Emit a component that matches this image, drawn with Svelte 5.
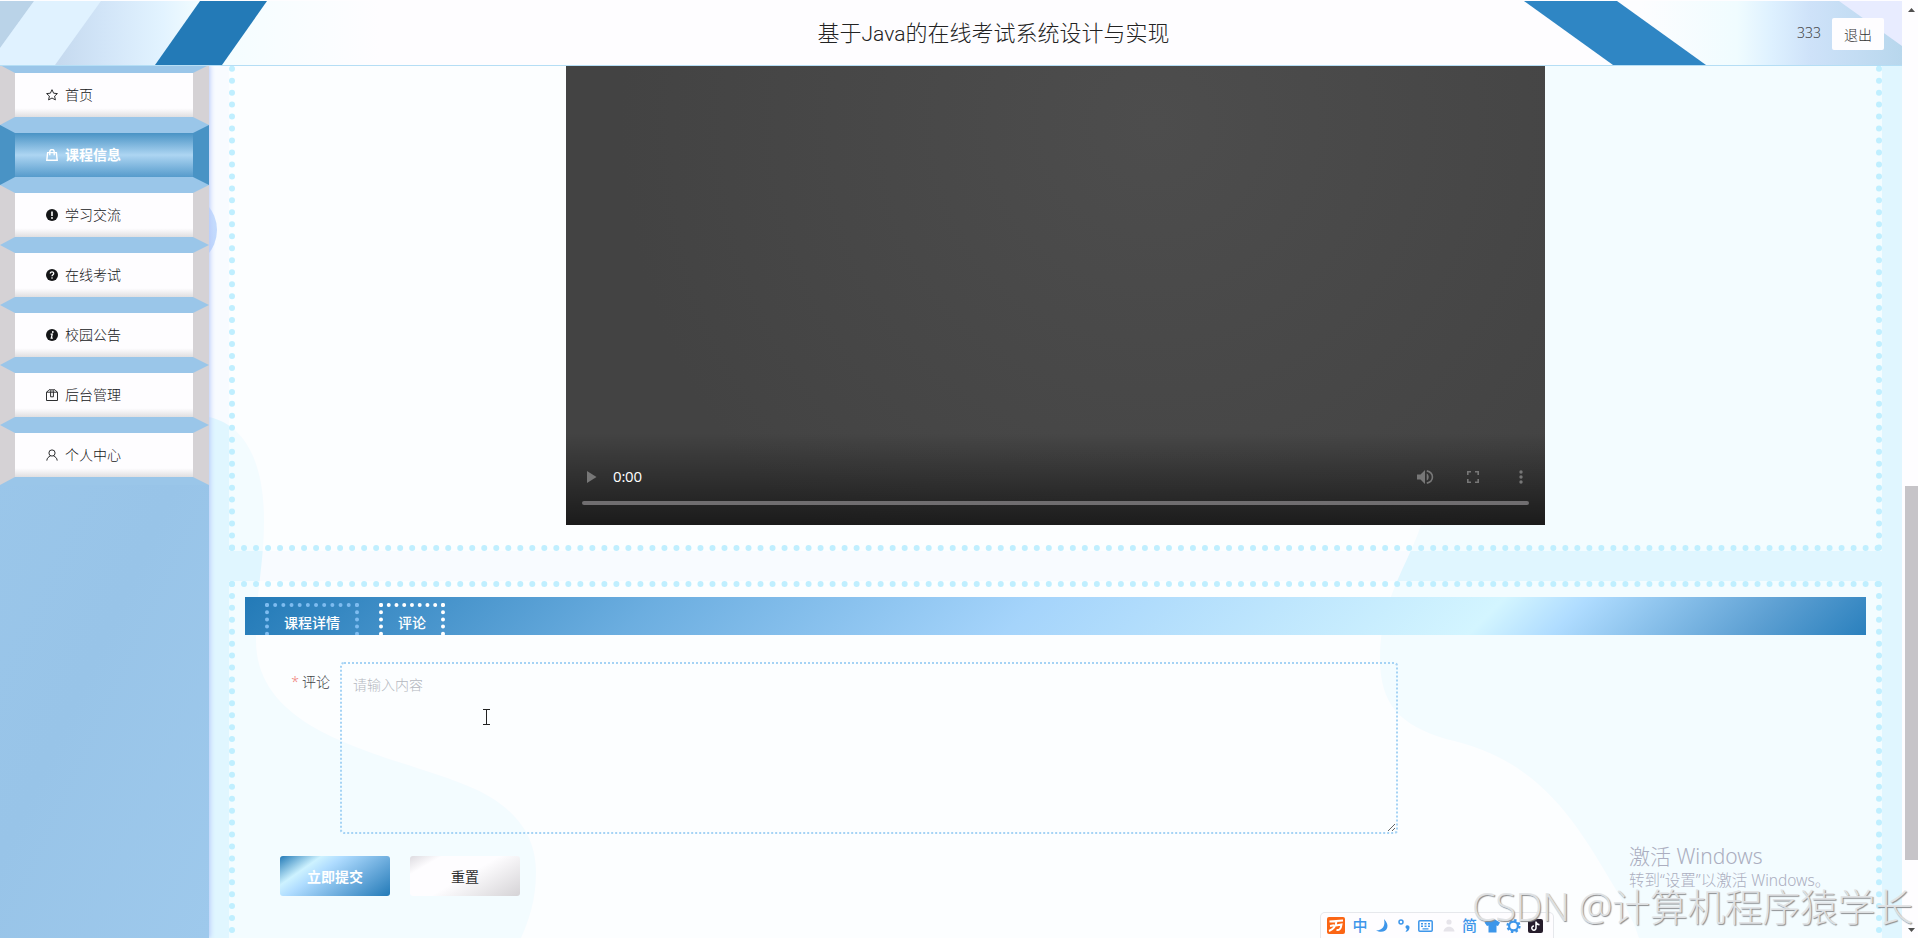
<script>
  const menu = [
    { label: '首页', icon: 'star' },
    { label: '课程信息', icon: 'bag', active: true },
    { label: '学习交流', icon: 'warn' },
    { label: '在线考试', icon: 'question' },
    { label: '校园公告', icon: 'info' },
    { label: '后台管理', icon: 'box' },
    { label: '个人中心', icon: 'user' }
  ];
  const tabs = [{ label: '课程详情' }, { label: '评论', active: true }];
</script>

<div class="screen">
  <header>
    <svg class="banner" width="1902" height="65" viewBox="0 0 1902 65">
      <defs>
        <linearGradient id="hl" gradientUnits="userSpaceOnUse" x1="60" y1="0" x2="380" y2="0">
          <stop offset="0" stop-color="#c6daef" /><stop offset=".14" stop-color="#d2e5f8" /><stop offset=".32" stop-color="#e2f3ff" /><stop offset=".44" stop-color="#f3fdff" /><stop offset=".68" stop-color="#f8fdff" /><stop offset="1" stop-color="#fefdff" />
        </linearGradient>
        <linearGradient id="hr" gradientUnits="userSpaceOnUse" x1="1640" y1="0" x2="1902" y2="0">
          <stop offset="0" stop-color="#fdfdff" /><stop offset=".37" stop-color="#f0fcff" /><stop offset=".5" stop-color="#def1ff" /><stop offset=".65" stop-color="#cee2f9" /><stop offset="1" stop-color="#b8d7ed" />
        </linearGradient>
      </defs>
      <path d="M0 1H380V65H0z" fill="url(#hl)" />
      <path d="M0 1H34L0 48z" fill="#bad3e8" />
      <path d="M34 1H101L55 65H0V48z" fill="#e0f2ff" />
      <path d="M200 1H267L222 65H155z" fill="#237ab7" />
      <path d="M1617 1H1902V65H1706z" fill="url(#hr)" />
      <path d="M1839 1H1902V46z" fill="#e8ecff" />
      <path d="M1524 1H1617L1706 65H1613z" fill="#2f86c4" />
    </svg>
    <h1>基于<span>Java</span>的在线考试系统设计与实现</h1>
    <div class="account"><span>333</span><button>退出</button></div>
  </header>

  <aside>
    {#each menu as item}
      <div class="item" class:active={item.active}>
        <svg width="12" height="12" viewBox="0 0 12 12" fill="none" stroke="currentColor" stroke-width=".9">
          {#if item.icon === 'star'}
            <path d="M6 .7 7.6 4.2 11.4 4.6 8.6 7.1 9.4 10.9 6 9 2.6 10.9 3.4 7.1 .6 4.6 4.4 4.2z" />
          {:else if item.icon === 'bag'}
            <path d="M1.6 3.6H10.4L11.2 11.3H.8zM3.8 6.2V2.8C3.8-.3 8.2-.3 8.2 2.8V6.2" stroke-width="1.4" />
          {:else if item.icon === 'warn'}
            <circle cx="6" cy="6" r="6" fill="currentColor" stroke="none" /><path d="M6 2.5V7" stroke="#fff" stroke-width="1.6" /><circle cx="6" cy="9" r=".9" fill="#fff" stroke="none" />
          {:else if item.icon === 'question'}
            <circle cx="6" cy="6" r="6" fill="currentColor" stroke="none" /><path d="M4.3 4.6C4.3 2.3 7.8 2.4 7.7 4.5 7.7 5.8 6 5.8 6 7.3" stroke="#fff" stroke-width="1.3" /><circle cx="6" cy="9" r=".8" fill="#fff" stroke="none" />
          {:else if item.icon === 'info'}
            <circle cx="6" cy="6" r="6" fill="currentColor" stroke="none" /><path d="M4.6 5.2H6.2L5.3 9.2H6.8" stroke="#fff" stroke-width="1.3" /><circle cx="6.8" cy="3" r=".9" fill="#fff" stroke="none" />
          {:else if item.icon === 'box'}
            <path d="M.5 3.2H11.5V11.5H.5zM.7 3.2 3 .8H9L11.3 3.2M4.6 3.2V7.8H7.4V3.2M4.8 1.2V3M7.2 1.2V3" />
          {:else}
            <circle cx="6" cy="4" r="3.1" /><path d="M.8 11.6C1 8.9 2.7 7.7 4.4 7.1M11.2 11.6C11 8.9 9.3 7.7 7.6 7.1" />
          {/if}
        </svg>
        <span>{item.label}</span>
      </div>
    {/each}
  </aside>

  <main>
    <svg class="blobs" width="1693" height="872" viewBox="209 66 1693 872">
      <defs><linearGradient id="ball" x1="0" x2="1" y1="0" y2="1"><stop offset="0" stop-color="#d8e8ff" /><stop offset="1" stop-color="#bcd5fc" /></linearGradient></defs>
      <circle cx="180" cy="230" r="37" fill="url(#ball)" />
      <path fill="#e0f6ff" d="M209 417C245 425 264 462 264 520C264 565 256 590 256 640C256 740 400 755 475 789C520 810 536 840 536 872C536 900 529 920 521 938H209z" />
      <path fill="#e0f6ff" d="M1480 66C1490 250 1445 440 1421 525C1408 565 1380 600 1380 658C1380 705 1400 725 1446 739C1545 760 1580 830 1618 893C1630 915 1635 925 1639 938H1902V66z" />
    </svg>

    <section class="card media">
      <div class="video">
        <div class="controls">
          <svg width="10" height="12" viewBox="0 0 10 12"><path d="M0 0 9.5 6 0 12z" fill="#777" /></svg>
          <time>0:00</time>
          <svg class="vol" width="17" height="14" viewBox="0 0 17 14" fill="#777"><path d="M0 4.5H3.5L8 0V14L3.5 9.5H0zM9.7 3.4C12.4 4.6 12.4 9.4 9.7 10.6z" /><path d="M9.8 .9C17.3 2.6 17.3 11.4 9.8 13.1" fill="none" stroke="#777" stroke-width="1.6" /></svg>
          <svg class="full" width="12" height="12" viewBox="0 0 12 12" fill="none" stroke="#777" stroke-width="1.6"><path d="M.8 4V.8H4M8 .8H11.2V4M11.2 8V11.2H8M4 11.2H.8V8" /></svg>
          <svg class="more" width="4" height="14" viewBox="0 0 4 14" fill="#777"><circle cx="2" cy="2" r="1.7" /><circle cx="2" cy="7" r="1.7" /><circle cx="2" cy="12" r="1.7" /></svg>
        </div>
        <div class="track"></div>
      </div>
    </section>

    <section class="card discuss">
      <nav>
        {#each tabs as tab}
          <div class="tab" class:current={tab.active}>{tab.label}</div>
        {/each}
      </nav>
      <div class="row">
        <label for="comment"><i>*</i>评论</label>
        <textarea id="comment" placeholder="请输入内容"></textarea>
      </div>
      <div class="actions">
        <button class="submit">立即提交</button>
        <button class="reset">重置</button>
      </div>
    </section>
  </main>

  <div class="scrollbar">
    <svg width="7" height="4" viewBox="0 0 7 4"><path d="M0 4 3.5 0 7 4z" fill="#505050" /></svg>
    <div class="thumb"></div>
    <svg width="7" height="4" viewBox="0 0 7 4"><path d="M0 0H7L3.5 4z" fill="#505050" /></svg>
  </div>

  <svg class="caret" width="7" height="16" viewBox="0 0 7 16" fill="none" stroke="#222"><path d="M0 .5H7M0 15.5H7M3.5 0V16" /></svg>

  <div class="ime">
    <svg width="232" height="25" viewBox="0 0 232 25">
      <rect x="6" y="4" width="18" height="17" rx="2" fill="#fb6514" />
      <path d="M8.500 8.500 22 7.500M8 18C13 16 15 12 15.500 8.500M15 12.500 20.500 11.500C20 15 19 17.500 15.500 17M9 13 13 12.300" fill="none" stroke="#fff" stroke-width="1.900" />
      <g fill="#3d96ea">
        <path d="M63 6C71 14 64 22 55 17.500C62 17 64.500 13 63 6z" />
        <circle cx="80" cy="9" r="2" fill="none" stroke="#3d96ea" stroke-width="1.500" />
        <path d="M84.500 13.500C85.500 11.500 89 12 88.500 15C88 17.500 87 18.500 84.500 19L86 16A2.200 2.200 0 0 1 84.500 13.500z" />
        <rect x="97.800" y="7.800" width="13.400" height="10.400" rx="1" fill="none" stroke="#3d96ea" stroke-width="1.500" />
        <path d="M100 10H102V11.500H100zM103.500 10H105.500V11.500H103.500zM107 10H109V11.500H107zM100 12.500H102V14H100zM103.500 12.500H105.500V14H103.500zM107 12.500H109V14H107zM101.500 15.300H107.500V16.500H101.500z" />
        <path d="M163.500 9.500 168.500 6.500C170 8 173 8 174 6.500L179 9.500 177 13 175.500 12.500V19.500H167.500V12.500L166 13z" />
      </g>
      <g fill="#e6e4ea"><circle cx="128" cy="9" r="2.600" /><path d="M122.500 18.500C123 12 133 12 133.500 18.500z" /></g>
      <circle cx="192.500" cy="13" r="5.800" fill="none" stroke="#3d96ea" stroke-width="2.600" stroke-dasharray="2.300 2.250" /><circle cx="192.500" cy="13" r="4.400" fill="none" stroke="#3d96ea" stroke-width="2.200" />
      <rect x="207" y="6" width="15" height="14" rx="2" fill="#261c2b" />
      <path d="M215 8.500V15A2.100 2.100 0 1 1 213 13M215 9C215.500 11 216.500 11.500 218.500 11.700" fill="none" stroke="#fff" stroke-width="1.500" />
      <text x="31.500" y="18" font-size="15">中</text>
      <text x="141" y="18" font-size="15">简</text>
    </svg>
  </div>

  <div class="activate"><b>激活 Windows</b><span>转到“设置”以激活 Windows。</span></div>
  <div class="mark">CSDN @计算机程序猿学长</div>
</div>

<style>
  :global(body) { margin: 0; overflow: hidden; background: #fefdff; }
  .screen { position: relative; display: grid; grid-template: 66px 872px / 209px 1693px 16px; width: 1918px; height: 938px; overflow: hidden; font: 300 14px "Noto Sans", "Noto Sans CJK SC", sans-serif; color: #151618; }
  button, textarea { font: inherit; box-sizing: border-box; }
  header { grid-column: 1 / 3; position: relative; box-sizing: border-box; border-bottom: 1px solid #b5def5; background: #fefdff; display: flex; align-items: center; justify-content: center; z-index: 2; }
  .banner { position: absolute; left: 0; top: 0; }
  h1 { margin: 0 0 0 85px; font-size: 22px; font-weight: 300; line-height: 32px; color: #222; position: relative; white-space: nowrap; }
  h1 span { font-family: Roboto, sans-serif; font-size: 21px; }
  .account { position: absolute; right: 18px; top: 18px; display: flex; align-items: center; gap: 11px; color: #444; }
  .account > span { margin-top: -3px; }
  .account button { width: 52px; height: 32px; padding: 0 0 1px; border: 0; border-radius: 2px; background: #fefdff; color: #333; }
  aside { background: linear-gradient(115deg, #9cc8eb, #98c4e8 60%, #9ec9ec); position: relative; z-index: 1; box-shadow: 1px 0 5px #b4c8fa; margin-top: -1px; }
  .item { box-sizing: border-box; height: 60px; border-style: solid; border-width: 8px 16px 8px 15px; border-color: #9ac6e9 #d5d2d5; background: linear-gradient(#fefdff 80%, #e0dfe1) padding-box; display: flex; align-items: center; padding-left: 31px; gap: 7px; line-height: 20px; }
  .item.active { border-color: #9ac6e9 #4993c5; background: linear-gradient(#4993c5, #add5f2 50%, #569bcc) padding-box; color: #fff; font-weight: 700; }
  main { position: relative; background: #f8fbff; display: flex; flex-direction: column; gap: 30px; padding: 0 20px; overflow: hidden; }
  .blobs { position: absolute; left: 0; top: 0; }
  .card { position: relative; box-sizing: border-box; width: 1653px; flex: none; border: 6px dotted #c0efff; background: rgba(255, 255, 255, .62); }
  .media { height: 605px; margin-top: -120px; display: flex; justify-content: center; padding-bottom: 20px; }
  .video { width: 979px; background: linear-gradient(transparent 84%, rgba(0, 0, 0, .6)), radial-gradient(circle at 60% 30%, #4d4d4d, #434343 75%); position: relative; display: flex; flex-direction: column; justify-content: flex-end; }
  .controls { display: flex; align-items: center; height: 20px; padding: 0 22px 0 21px; margin-bottom: 14px; }
  .controls time { font: 400 15px "Open Sans", sans-serif; color: #fff; margin: -2px 0 0 16px; letter-spacing: -.2px; }
  .vol { margin-left: auto; }
  .full { margin-left: 33px; }
  .more { margin-left: 40px; }
  .track { height: 4px; border-radius: 2px; background: #706e70; margin: 0 16px 20px; }
  .discuss { height: 400px; padding: 10px; }
  nav { height: 38px; display: flex; gap: 20px; padding: 6px 20px 0; box-sizing: border-box; overflow: hidden; background: linear-gradient(135deg, #237ab7 0%, #6caee0 25%, #a5d4fb 48%, #d3f5ff 76%, #afdcff 81%, #5c9fd2 93%, #2a80bd 100%); }
  .tab { box-sizing: border-box; flex: none; height: 40px; padding: 0 15px; border: 4px dotted #7ebcf0; line-height: 32px; color: #fff; font-weight: 500; }
  .tab.current { border-color: #fff; }
  .row { display: flex; margin-top: 27px; }
  label { width: 85px; text-align: right; margin-right: 10px; line-height: 40px; color: #404245; }
  label i { font-style: normal; color: #f08078; margin-right: 3px; }
  textarea { width: 1058px; height: 172px; border: 2px dotted #a5d3f5; border-radius: 4px; background: transparent; padding: 7px 11px; line-height: 27px; resize: both; outline: 0; }
  textarea::placeholder { color: #b4b8c0; }
  .actions { display: flex; gap: 20px; margin: 22px 0 0 35px; }
  .actions button { width: 110px; height: 40px; padding: 0; border: 0; border-radius: 3px; }
  .submit { color: #fff; font-weight: 700; background: linear-gradient(145deg, #237ab7, #cdf2ff 25%, #afdcff 38%, #66a8da 70%, #237ab7); }
  .reset { color: #303030; font-weight: 400; background: linear-gradient(150deg, #dddbe0, #fefdff 18%, #fefdff 50%, #d5d3d6); }
  .scrollbar { grid-column: 3; grid-row: 1 / 3; background: #fefdff; display: flex; flex-direction: column; align-items: center; justify-content: space-between; box-sizing: border-box; padding: 8px 0 6px 3px; }
  .thumb { width: 13px; height: 374px; background: #c6c4c8; margin-top: 405px; }
  .caret { position: absolute; left: 483px; top: 709px; }
  .ime { position: absolute; left: 1321px; top: 913px; width: 232px; height: 25px; box-sizing: border-box; background: #fefdff; border-radius: 4px 4px 0 0; box-shadow: 0 0 0 1px #e6e8ec; z-index: 3; }
  .ime text { fill: #3d96ea; font-weight: 500; }
  .activate { position: absolute; left: 1629px; top: 841px; color: #abaec0; display: flex; flex-direction: column; white-space: nowrap; }
  .activate b { font-weight: 300; font-size: 21px; line-height: 30px; }
  .activate span { font-size: 15.500px; line-height: 18px; }
  .mark { position: absolute; left: 1472px; top: 878px; line-height: 56px; font-size: 38px; letter-spacing: -.45px; font-weight: 300; white-space: nowrap; color: rgba(226, 228, 230, .95); text-shadow: 1px 1px 1px #8b8d90; z-index: 4; }
</style>
